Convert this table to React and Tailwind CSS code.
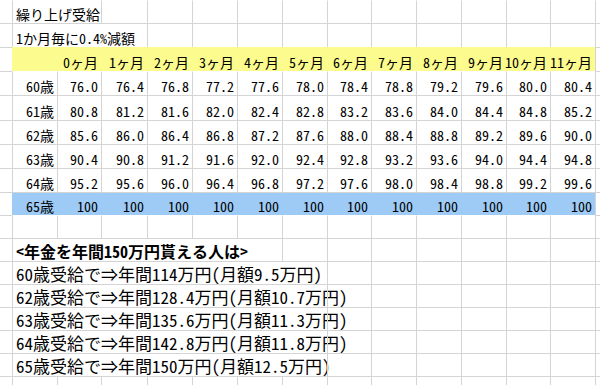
import React from 'react';

const GRID =
  'grid grid-cols-[12px_45px_44px_46px_45px_45px_45px_45px_44px_45px_45px_45px_44px_45px_5px]';
const FONT = "font-['Noto_Sans_Mono_CJK_JP','Noto_Sans_CJK_JP',sans-serif]";

const months = ['0ヶ月', '1ヶ月', '2ヶ月', '3ヶ月', '4ヶ月', '5ヶ月', '6ヶ月', '7ヶ月', '8ヶ月', '9ヶ月', '10ヶ月', '11ヶ月'];

const rows = [60, 61, 62, 63, 64].map((age, i) => ({
  age,
  values: months.map((_, m) => (76 + 4.8 * i + 0.4 * m).toFixed(1)),
}));

const notes = [
  '60歳受給で⇒年間114万円(月額9.5万円)',
  '62歳受給で⇒年間128.4万円(月額10.7万円)',
  '63歳受給で⇒年間135.6万円(月額11.3万円)',
  '64歳受給で⇒年間142.8万円(月額11.8万円)',
  '65歳受給で⇒年間150万円(月額12.5万円)',
];

// plain grid cell
const Cell = ({ first, noTop, span = '', fill = '', right, extra = 'text-[14px]', children }) => {
  const left = first ? '' : 'border-l';
  const top = noTop ? 'border-t-transparent' : 'border-t-[#d4d4d4]';
  const side = first ? '' : fill ? 'border-l-transparent' : 'border-l-[#d4d4d4]';
  return (
    <div
      className={`${left} border-t ${top} ${side} ${span} ${fill} ${extra} flex items-end whitespace-nowrap leading-none pb-[2px] ${
        right ? 'justify-end pr-[3px]' : 'pl-[3px]'
      }`}
    >
      {children}
    </div>
  );
};

const Empties = ({ n, noTop }) =>
  Array.from({ length: n }).map((_, i) => <Cell key={i} noTop={noTop} />);

export default function App() {
  return (
    <div className={`w-[600px] h-[385px] overflow-hidden bg-white text-black ${FONT}`}>
      {/* title */}
      <div className={`${GRID} h-[23px]`}>
        <Cell first noTop />
        <Cell noTop span="col-span-2">繰り上げ受給</Cell>
        <Empties n={11} noTop />
        <Cell noTop />
      </div>
      <div className={`${GRID} h-[24px]`}>
        <Cell first />
        <Cell span="col-span-3">1か月毎に0.4%減額</Cell>
        <Empties n={10} />
        <Cell />
      </div>

      {/* header */}
      <div className={`${GRID} h-[24px]`}>
        <Cell first />
        <Cell fill="bg-[#fcfc8e]" noTop />
        {months.map((m) => (
          <Cell key={m} fill="bg-[#fcfc8e]" noTop right>
            {m}
          </Cell>
        ))}
        <Cell />
      </div>

      {/* values */}
      {rows.map((r, i) => (
        <div key={r.age} className={`${GRID} ${i === 1 ? 'h-[25px]' : 'h-[24px]'}`}>
          <Cell first />
          <Cell right noTop={i === 0}>
            {r.age}歳
          </Cell>
          {r.values.map((v, m) => (
            <Cell key={m} right noTop={i === 0}>
              {v}
            </Cell>
          ))}
          <Cell />
        </div>
      ))}

      <div className={`${GRID} h-[23px]`}>
        <Cell first />
        <Cell fill="bg-[#9ecbf6]" right>
          65歳
        </Cell>
        {months.map((m) => (
          <Cell key={m} fill="bg-[#9ecbf6]" right>
            100
          </Cell>
        ))}
        <Cell />
      </div>

      <div className={`${GRID} h-[23px]`}>
        <Cell first />
        <Empties n={13} noTop />
        <Cell />
      </div>

      {/* notes */}
      <div className={`${GRID} h-[23px]`}>
        <Cell first />
        <Cell span="col-span-6" extra="text-[16px] font-bold">
          &lt;年金を年間150万円貰える人は&gt;
        </Cell>
        <Empties n={7} />
        <Cell />
      </div>
      {notes.map((t) => (
        <div key={t} className={`${GRID} h-[23px]`}>
          <Cell first />
          <Cell span="col-span-7" extra="text-[17px]">
            {t}
          </Cell>
          <Empties n={6} />
          <Cell />
        </div>
      ))}
      <div className={`${GRID} h-[10px]`}>
        <Cell first />
        <Empties n={13} />
        <Cell />
      </div>
    </div>
  );
}
